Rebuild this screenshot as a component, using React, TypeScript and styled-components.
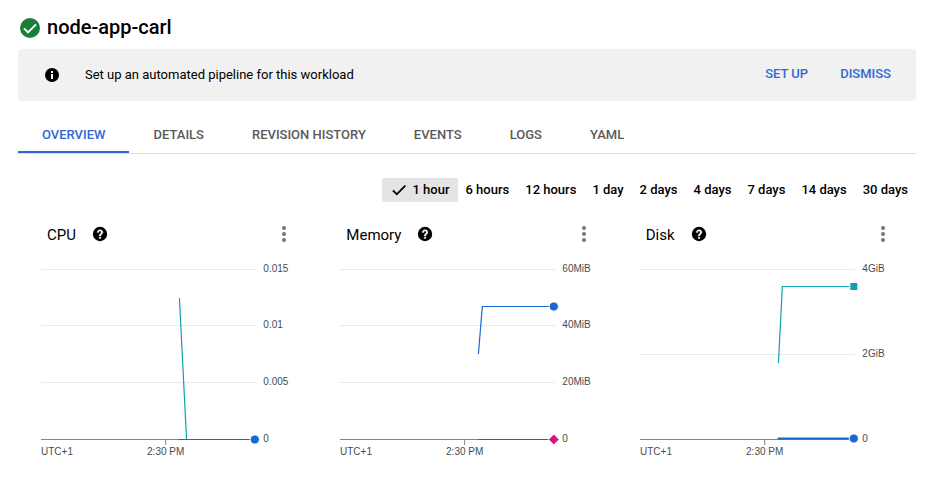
import React from "react";
import styled, { createGlobalStyle } from "styled-components";

const GlobalStyle = createGlobalStyle`
  *, *::before, *::after { box-sizing: border-box; }
  body {
    margin: 0;
    background: #fff;
    color: #000;
    font-family: Roboto, "Liberation Sans", sans-serif;
  }
  button { font-family: inherit; }
`;

const Page = styled.main`
  padding: 16px 23px 24px 18px;
`;

const TitleRow = styled.header`
  display: flex;
  align-items: center;
  gap: 5px;
  height: 24px;
  margin-bottom: 9px;
`;

const Title = styled.h1`
  margin: 0;
  padding-bottom: 2px;
  font-size: 20px;
  line-height: 24px;
  font-weight: 500;
`;

const Banner = styled.section`
  display: flex;
  align-items: center;
  height: 52px;
  padding: 0 17px 0 26px;
  border-radius: 4px;
  background: #f1f1f1;
`;

const BannerText = styled.p`
  flex: 1;
  margin: 0 0 0 25px;
  font-size: 13px;
  line-height: 20px;
`;

const BannerActions = styled.div`
  display: flex;
  gap: 16px;
`;

const ActionButton = styled.button`
  height: 36px;
  padding: 0 8px 4px;
  border: 0;
  background: transparent;
  color: #3367d6;
  font-size: 13px;
  font-weight: 500;
  cursor: pointer;
`;

const TabBar = styled.nav`
  display: flex;
  margin-top: 15px;
  border-bottom: 1px solid #dadce0;
`;

const Tab = styled.button<{ $active?: boolean }>`
  height: 37px;
  padding: 2px 24px 0;
  border: 0;
  border-bottom: 2px solid ${(p) => (p.$active ? "#3367d6" : "transparent")};
  background: transparent;
  color: ${(p) => (p.$active ? "#3367d6" : "#5a5a5a")};
  font-size: 13px;
  font-weight: 500;
  white-space: nowrap;
  cursor: pointer;
`;

const RangeBar = styled.div`
  display: flex;
  justify-content: flex-end;
  margin-top: 24px;
`;

const RangeButton = styled.button<{ $active?: boolean }>`
  display: flex;
  align-items: center;
  gap: 4px;
  height: 24px;
  padding: 0 8px 1px;
  border: 0;
  border-radius: 2px 0 0 2px;
  background: ${(p) => (p.$active ? "#e4e4e4" : "transparent")};
  color: #000;
  font-size: 13px;
  font-weight: 500;
  white-space: nowrap;
  cursor: pointer;
`;

const Charts = styled.div`
  display: grid;
  grid-template-columns: repeat(3, minmax(0, 1fr));
  margin-top: 16px;
`;

const Card = styled.section`
  min-width: 0;
`;

const CardHeader = styled.div`
  display: flex;
  align-items: center;
  height: 32px;
  padding: 0 21px 0 29px;
`;

const CardTitle = styled.h2`
  margin: 0 15px 0 0;
  padding-top: 2px;
  font-size: 15px;
  line-height: 20px;
  font-weight: 400;
`;

const IconButton = styled.button`
  display: flex;
  padding: 0;
  border: 0;
  background: transparent;
  color: #000;
  cursor: pointer;
`;

const MenuButton = styled(IconButton)`
  margin-left: auto;
  color: #757575;
`;

const ChartBody = styled.div`
  padding: 19px 61px 0 23px;
`;

const Plot = styled.svg`
  display: block;
  width: 100%;
  height: 192px;
  overflow: visible;
  font-family: "Liberation Sans", Arial, sans-serif;
  font-size: 10px;
  fill: #474b4f;
`;

const CheckCircle = () => (
  <svg width="24" height="24" viewBox="0 0 24 24" aria-hidden="true">
    <circle cx="12" cy="12" r="10" fill="#188038" />
    <path d="M6 12.4l4 4 8-8" fill="none" stroke="#fff" strokeWidth="2" />
  </svg>
);

const InfoIcon = () => (
  <svg width="16" height="16" viewBox="0 0 16 16" aria-hidden="true">
    <circle cx="8" cy="8" r="7" />
    <path d="M7 4h2v2H7zM7 7h2v5H7z" fill="#f1f1f1" />
  </svg>
);

const HelpIcon = () => (
  <svg width="18" height="18" viewBox="0 0 24 24" fill="currentColor" aria-hidden="true">
    <circle cx="12" cy="12" r="9.6" />
    <path
      d="M8.3 10c0-2.3 1.6-3.8 3.8-3.8s3.8 1.4 3.8 3.4c0 2.5-2.9 2.7-2.9 5h-2c0-3.3 2.7-3.4 2.7-5 0-.9-.6-1.5-1.6-1.5s-1.7.7-1.7 1.9zM11 16h2v2h-2z"
      fill="#fff"
      stroke="#fff"
      strokeWidth="0.5"
    />
  </svg>
);

const MoreIcon = () => (
  <svg width="24" height="24" viewBox="0 0 24 24" fill="currentColor" aria-hidden="true">
    <circle cx="12" cy="6" r="2" />
    <circle cx="12" cy="12" r="2" />
    <circle cx="12" cy="18" r="2" />
  </svg>
);

const Check = () => (
  <svg width="18" height="18" viewBox="0 0 24 24" aria-hidden="true">
    <path d="M9 16.17L4.83 12l-1.42 1.41L9 19 21 7l-1.41-1.41z" stroke="#000" strokeWidth="0.6" />
  </svg>
);

type Point = [number, number];
type Marker = "circle" | "square" | "diamond" | "none";

interface Series {
  color: string;
  width: number;
  points: Point[];
  marker: Marker;
}

interface Metric {
  name: string;
  ticks: { label: string; y: number }[];
  series: Series[];
}

const BASELINE = 170;

/* Points are [percent across the plot, pixels below the top grid line]. */
const metrics: Metric[] = [
  {
    name: "CPU",
    ticks: [
      { label: "0.015", y: 0 },
      { label: "0.01", y: 56 },
      { label: "0.005", y: 113 },
      { label: "0", y: BASELINE },
    ],
    series: [
      { color: "#129eaf", width: 1.2, points: [[64.3, 29], [67.6, 170]], marker: "none" },
      { color: "#1967d2", width: 1.2, points: [[64.3, 170], [99.3, 170]], marker: "circle" },
    ],
  },
  {
    name: "Memory",
    ticks: [
      { label: "60MiB", y: 0 },
      { label: "40MiB", y: 56 },
      { label: "20MiB", y: 113 },
      { label: "0", y: BASELINE },
    ],
    series: [
      { color: "#1967d2", width: 1.2, points: [[64.3, 84], [66.1, 37], [99.3, 37]], marker: "circle" },
      { color: "#d01884", width: 1.2, points: [[64.3, 170], [99.3, 170]], marker: "diamond" },
    ],
  },
  {
    name: "Disk",
    ticks: [
      { label: "4GiB", y: 0 },
      { label: "2GiB", y: 85 },
      { label: "0", y: BASELINE },
    ],
    series: [
      { color: "#129eaf", width: 1.2, points: [[64.3, 93], [66.1, 17], [99.3, 17]], marker: "square" },
      { color: "#1967d2", width: 2, points: [[64.3, 169], [99.3, 169]], marker: "circle" },
    ],
  },
];

const EndMarker = ({ kind, color, at }: { kind: Marker; color: string; at: Point }) => (
  <svg x={`${at[0]}%`} y={at[1] + 0.5} overflow="visible" fill={color}>
    {kind === "circle" && <circle r="4.6" stroke="#fff" strokeWidth="1" />}
    {kind === "square" && <rect x="-4" y="-4" width="8" height="8" stroke="#fff" strokeWidth="1" />}
    {kind === "diamond" && <path d="M0-5.4L5.4 0 0 5.4-5.4 0z" stroke="#fff" strokeWidth="1" />}
  </svg>
);

const MetricChart = ({ metric }: { metric: Metric }) => (
  <Plot role="img" aria-label={`${metric.name} over the last hour`}>
    {metric.ticks.map(({ label, y }) => (
      <React.Fragment key={label}>
        <line
          x1="0"
          x2="100%"
          y1={y + 0.5}
          y2={y + 0.5}
          stroke={y === BASELINE ? "#80868b" : "#e8eaed"}
        />
        <svg x="100%" overflow="visible">
          <text x="7" y={y + 3}>{label}</text>
        </svg>
      </React.Fragment>
    ))}
    <line x1="57.9%" x2="57.9%" y1={BASELINE} y2={BASELINE + 6} stroke="#80868b" />
    <text x="0" y="186">UTC+1</text>
    <text x="57.9%" y="186" textAnchor="middle">2:30 PM</text>
    {metric.series.map((s) => (
      <g key={s.color}>
        {s.points.slice(1).map(([x, y], i) => (
          <line
            key={i}
            x1={`${s.points[i][0]}%`}
            y1={s.points[i][1] + 0.5}
            x2={`${x}%`}
            y2={y + 0.5}
            stroke={s.color}
            strokeWidth={s.width}
            strokeLinecap="round"
          />
        ))}
        <EndMarker kind={s.marker} color={s.color} at={s.points[s.points.length - 1]} />
      </g>
    ))}
  </Plot>
);

const tabs = ["OVERVIEW", "DETAILS", "REVISION HISTORY", "EVENTS", "LOGS", "YAML"];
const ranges = ["1 hour", "6 hours", "12 hours", "1 day", "2 days", "4 days", "7 days", "14 days", "30 days"];

export default function App() {
  const [tab, setTab] = React.useState(tabs[0]);
  const [range, setRange] = React.useState(ranges[0]);

  return (
    <Page>
      <GlobalStyle />
      <TitleRow>
        <CheckCircle />
        <Title>node-app-carl</Title>
      </TitleRow>
      <Banner>
        <InfoIcon />
        <BannerText>Set up an automated pipeline for this workload</BannerText>
        <BannerActions>
          <ActionButton type="button">SET UP</ActionButton>
          <ActionButton type="button">DISMISS</ActionButton>
        </BannerActions>
      </Banner>
      <TabBar role="tablist">
        {tabs.map((t) => (
          <Tab key={t} type="button" role="tab" aria-selected={t === tab} $active={t === tab} onClick={() => setTab(t)}>
            {t}
          </Tab>
        ))}
      </TabBar>
      <RangeBar>
        {ranges.map((r) => (
          <RangeButton key={r} type="button" aria-pressed={r === range} $active={r === range} onClick={() => setRange(r)}>
            {r === range && <Check />}
            {r}
          </RangeButton>
        ))}
      </RangeBar>
      <Charts>
        {metrics.map((m) => (
          <Card key={m.name}>
            <CardHeader>
              <CardTitle>{m.name}</CardTitle>
              <IconButton type="button" aria-label={`About ${m.name}`}>
                <HelpIcon />
              </IconButton>
              <MenuButton type="button" aria-label={`${m.name} options`}>
                <MoreIcon />
              </MenuButton>
            </CardHeader>
            <ChartBody>
              <MetricChart metric={m} />
            </ChartBody>
          </Card>
        ))}
      </Charts>
    </Page>
  );
}
